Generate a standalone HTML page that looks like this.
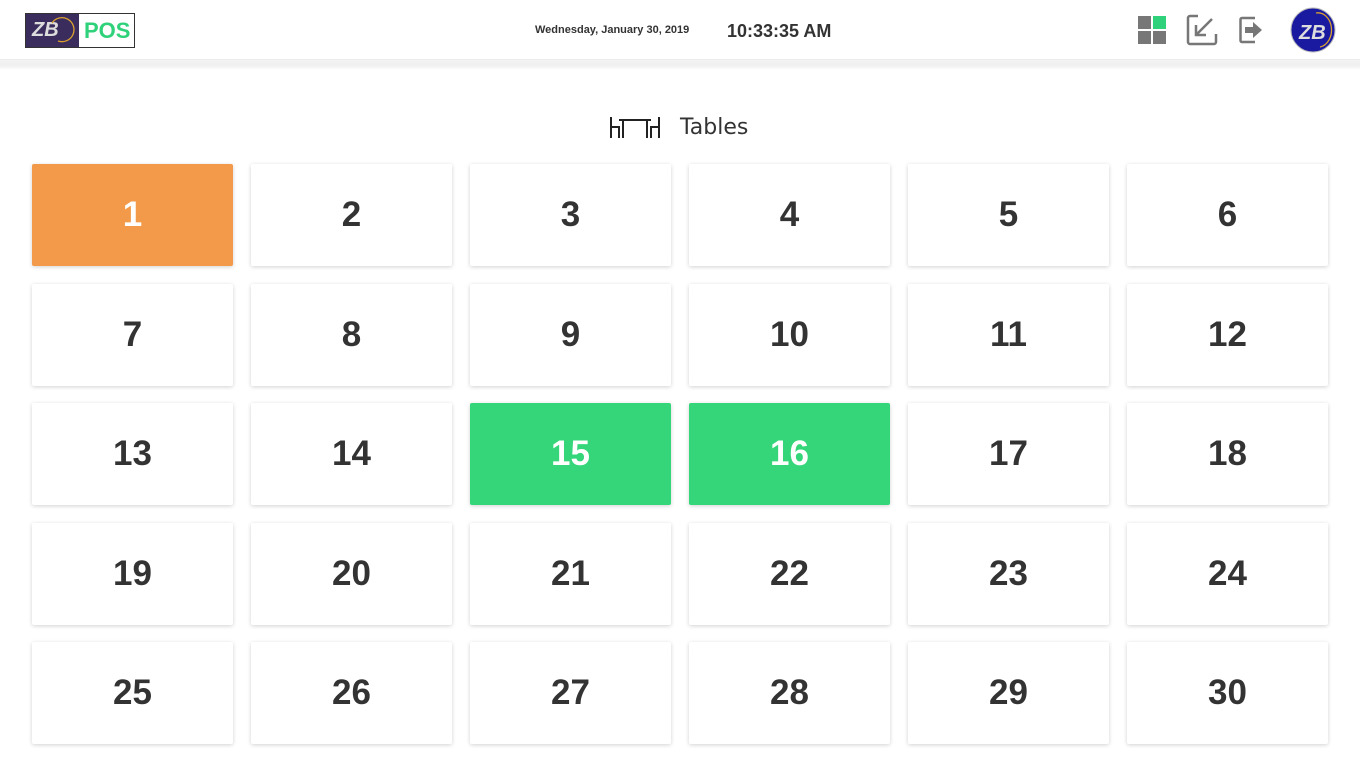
<!DOCTYPE html>
<html><head><meta charset="utf-8"><style>
*{margin:0;padding:0;box-sizing:border-box}
body{width:1360px;height:765px;background:#fff;font-family:"Liberation Sans",sans-serif;position:relative;overflow:hidden}
.hdr{position:absolute;left:0;top:0;width:1360px;height:60px;background:#fff;border-bottom:1px solid #ececec}
.band{position:absolute;left:0;top:60px;width:1360px;height:9px;background:linear-gradient(#f4f4f4,#efefef 60%,#fcfcfc)}
.logo{position:absolute;left:25px;top:13px;width:110px;height:35px;border:1px solid #333;display:flex}
.logo .d{width:53px;background:#3a2c5c;position:relative;color:#ddd;font-weight:bold;font-style:italic;font-size:20px;line-height:33px;padding-left:6px}
.logo .w{flex:1;color:#2fd27a;font-weight:bold;font-size:22px;line-height:33px;padding-left:5px}
.date{position:absolute;left:535px;top:24px;font-size:11px;font-weight:bold;color:#333}
.time{position:absolute;left:727px;top:21px;font-size:18px;font-weight:bold;color:#333}
.card{position:absolute;width:201px;height:102px;background:#fff;border-radius:2px;box-shadow:0 1px 4px rgba(0,0,0,.18);display:flex;align-items:center;justify-content:center;font-family:"Liberation Sans",sans-serif;font-weight:bold;font-size:35px;color:#333}
.o{background:#f29a4a;color:#fff}
.g{background:#34d679;color:#fff}
.title{position:absolute;left:680px;top:115px;color:#333;font-family:"DejaVu Sans",sans-serif;font-size:22px}
</style></head><body>
<div class="hdr"></div><div class="band"></div>
<div class="logo"><div class="d">ZB<svg style="position:absolute;left:22px;top:1px" width="28" height="28"><path d="M4 8 A12 12 0 1 1 10 26" fill="none" stroke="#d9a030" stroke-width="1.3"/></svg></div><div class="w">POS</div></div>
<div class="date">Wednesday, January 30, 2019</div>
<div class="time">10:33:35 AM</div>
<svg style="position:absolute;left:1138px;top:16px" width="28" height="28"><rect x="0" y="0" width="13" height="13" fill="#777"/><rect x="15" y="0" width="13" height="13" fill="#2fd27a"/><rect x="0" y="15" width="13" height="13" fill="#777"/><rect x="15" y="15" width="13" height="13" fill="#777"/></svg>
<svg style="position:absolute;left:1186px;top:14px" width="32" height="32" fill="none" stroke="#777" stroke-width="2.5"><path d="M12 2H4a2 2 0 0 0-2 2v24a2 2 0 0 0 2 2h24a2 2 0 0 0 2-2V20"/><path d="M26 5L11 20M10 11v10h10"/></svg>
<svg style="position:absolute;left:1239px;top:16px" width="26" height="28"><path d="M16 2H3a1.5 1.5 0 0 0-1.5 1.5v21A1.5 1.5 0 0 0 3 26h13" fill="none" stroke="#777" stroke-width="2.5"/><path d="M6 11h8V6l9 8-9 8v-5H6z" fill="#777"/></svg>
<svg style="position:absolute;left:1290px;top:7px" width="46" height="46"><circle cx="23" cy="23" r="22" fill="#1a1aa0"/><circle cx="23" cy="23" r="22" fill="none" stroke="#bbb" stroke-width="1"/><text x="9" y="32" font-family="Liberation Sans" font-weight="bold" font-style="italic" font-size="20" fill="#ddd">ZB</text><path d="M26 6 A11 14 0 0 1 30 40" fill="none" stroke="#d9a030" stroke-width="1.3"/></svg>
<svg style="position:absolute;left:609px;top:115px" width="52" height="24" fill="none" stroke="#222" stroke-width="2"><path d="M2 2v21M2 12h8v11M10 5h32M14 5v18M38 5v18M50 2v21M50 12h-8v11"/></svg>
<div class="title">Tables</div>
<div id="g"></div>
<script>
var h='';for(var i=0;i<30;i++){var c=i%6,r=Math.floor(i/6);var cl=i==0?' o':(i==14||i==15?' g':'');h+='<div class="card'+cl+'" style="left:'+(32+c*219)+'px;top:'+(164+r*119.5)+'px">'+(i+1)+'</div>';}
document.getElementById('g').outerHTML=h;
</script>
</body></html>
